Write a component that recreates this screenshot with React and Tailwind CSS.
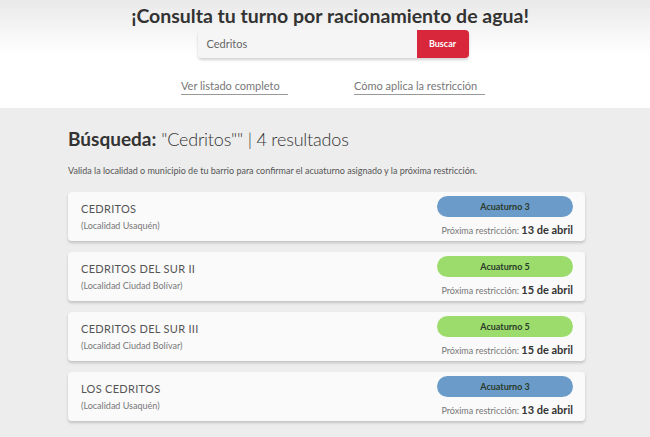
import React from "react";

const results = [
  { name: "CEDRITOS", locality: "(Localidad Usaquén)", turno: 3, date: "13 de abril" },
  { name: "CEDRITOS DEL SUR II", locality: "(Localidad Ciudad Bolívar)", turno: 5, date: "15 de abril" },
  { name: "CEDRITOS DEL SUR III", locality: "(Localidad Ciudad Bolívar)", turno: 5, date: "15 de abril" },
  { name: "LOS CEDRITOS", locality: "(Localidad Usaquén)", turno: 3, date: "13 de abril" },
];

const ResultCard = ({ item }) => {
  const pill = item.turno === 3 ? "bg-[#6b9bc8]" : "bg-[#9cdc6c]";
  return (
    <div className="flex justify-between h-[49px] bg-[#fafafa] rounded-[4px] shadow-[0_2px_3px_rgba(0,0,0,0.18)] pl-[13px] pr-[12px]">
      <div className="flex flex-col pt-[10px]">
        <span className="text-[11px] leading-[14px] text-[#555] tracking-[0.3px]">{item.name}</span>
        <span className="mt-[4px] text-[9px] leading-[12px] text-[#777]">{item.locality}</span>
      </div>
      <div className="flex flex-col items-end pt-[4px]">
        <div className={`w-[136px] h-[21px] rounded-full flex items-center justify-center text-[9px] font-bold text-[#2a3a2a] ${pill}`}>
          Acuaturno {item.turno}
        </div>
        <div className="mt-[4px] leading-[14px]">
          <span className="text-[9px] text-[#777]">Próxima restricción: </span>
          <span className="text-[11px] font-bold text-[#333]">{item.date}</span>
        </div>
      </div>
    </div>
  );
};

export default function App() {
  return (
    <div className="min-h-[437px] bg-[#ededed] font-['Lato',sans-serif]">
      {/* cabecera con buscador */}
      <header className="h-[108px] bg-gradient-to-b from-[#e9e9e9] via-white to-white flex flex-col items-center pt-[4px] pl-[16px]">
        <h1 className="-ml-[6px] text-[19.5px] leading-[24px] font-bold text-[#333]">
          ¡Consulta tu turno por racionamiento de agua!
        </h1>
        <div className="mt-[2px] flex w-[271px] h-[28px] rounded-[4px] shadow-[0_2px_3px_rgba(0,0,0,0.18)]">
          <div className="flex-1 flex items-center bg-[#f5f5f5] rounded-l-[4px] pl-[9px] text-[11px] text-[#666]">
            Cedritos
          </div>
          <button className="w-[52px] bg-[#d8263b] rounded-r-[4px] text-white text-[9px] font-bold">
            Buscar
          </button>
        </div>
        <div className="mt-[21px] flex gap-[66px] text-[11px] text-[#777]">
          <a className="w-[107px] border-b border-[#999] pb-[1px] leading-[14px]">Ver listado completo</a>
          <a className="w-[131px] border-b border-[#999] pb-[1px] leading-[14px]">Cómo aplica la restricción</a>
        </div>
      </header>

      <main className="w-[517px] ml-[68px] pt-[19px] pb-[16px]">
        <h2 className="text-[19px] leading-[24px] text-[#333]">
          <span className="font-bold">Búsqueda:</span>{" "}
          <span className="text-[18px] font-light tracking-[-0.2px]">"Cedritos"" | 4 resultados</span>
        </h2>
        <p className="mt-[14px] text-[9px] leading-[12px] text-[#555]">
          Valida la localidad o municipio de tu barrio para confirmar el acuaturno asignado y la próxima restricción.
        </p>
        <div className="mt-[15px] flex flex-col gap-[11px]">
          {results.map((r) => (
            <ResultCard key={r.name} item={r} />
          ))}
        </div>
      </main>
    </div>
  );
}
